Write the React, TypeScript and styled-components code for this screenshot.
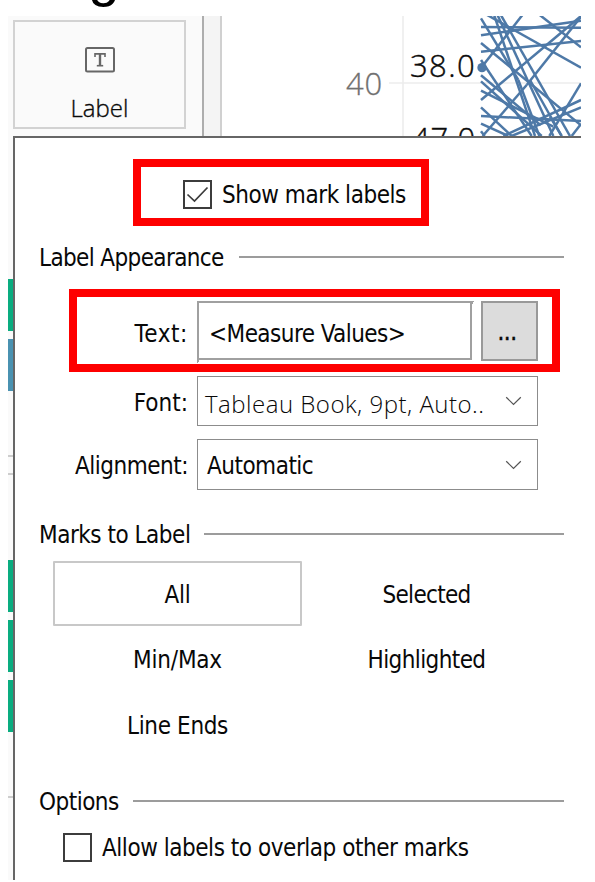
import React from "react";
import styled, { createGlobalStyle } from "styled-components";

const GlobalStyle = createGlobalStyle`
  *, *::before, *::after { box-sizing: border-box; }
  body { margin: 0; background: #fff; color: #080808; font: 24px/30px "DejaVu Sans Condensed", "DejaVu Sans", sans-serif; }
`;

const Page = styled.main`
  width: 595px;
  height: 882px;
  overflow: hidden;
  background: #fff;
`;

const Heading = styled.header`
  height: 16px;
  padding-left: 88px;
  overflow: hidden;
  color: #000;
  font: 57px/60px "Liberation Sans", Arial, sans-serif;
`;

const HeadingText = styled.div`
  margin-top: -55px;
`;

const Workspace = styled.section`
  position: relative;
  display: flex;
  width: 573px;
  height: 864px;
  margin-left: 8px;
  overflow: hidden;
`;

const Shelf = styled.aside`
  display: flex;
  flex-direction: column;
  width: 194px;
  padding-top: 4px;
  background: #fafafa;
`;

const LabelCard = styled.div`
  display: flex;
  flex-direction: column;
  align-items: center;
  gap: 20px;
  width: 173px;
  height: 109px;
  margin: 0 0 150px 5px;
  padding-top: 25px;
  border: 2px solid #d2d2d2;
  font-family: "Open Sans", sans-serif;
  font-weight: 300;
  line-height: 29px;
  -webkit-text-stroke: 0.35px #0c0c0c;
`;

const Pill = styled.div<{ $color: string; $gap: number }>`
  height: 52px;
  margin-bottom: ${(p) => p.$gap}px;
  background: ${(p) => p.$color};
`;

const ShelfRule = styled.div<{ $gap: number }>`
  height: 2px;
  margin-bottom: ${(p) => p.$gap}px;
  background: #cdcdcd;
`;

const Splitter = styled.div`
  width: 20px;
  border-left: 2px solid #adadad;
  border-right: 2px solid #d0d0d0;
  background: #f4f4f4;
`;

const Chart = styled.svg`
  display: block;
  width: 359px;
  height: 120px;
  font-family: "Open Sans", sans-serif;
  font-weight: 300;
  font-size: 31px;
`;

const Popup = styled.section`
  position: absolute;
  top: 120px;
  left: 5px;
  width: 568px;
  height: 744px;
  padding-top: 21px;
  border-top: 2px solid #666;
  border-left: 2px solid #666;
  background: #fff;
`;

const Callout = styled.div<{ $left: number; $width: number; $height: number }>`
  display: flex;
  align-items: center;
  width: ${(p) => p.$width}px;
  height: ${(p) => p.$height}px;
  margin-left: ${(p) => p.$left}px;
  border: 8px solid #fe0000;
`;

const Text = styled.span<{ $track?: number }>`
  padding-top: 1px;
  white-space: pre;
  letter-spacing: ${(p) => p.$track ?? 0}px;
`;

const CheckRow = styled.label<{ $left: number; $top: number }>`
  display: flex;
  align-items: center;
  gap: 10px;
  height: 29px;
  margin: ${(p) => p.$top}px 0 0 ${(p) => p.$left}px;
`;

const CheckBox = styled.span`
  display: flex;
  width: 29px;
  height: 29px;
  border: 2px solid #3c3c3c;
  background: #fff;
`;

const SectionTitle = styled.div<{ $top: number; $gap: number }>`
  display: flex;
  align-items: center;
  gap: ${(p) => p.$gap}px;
  height: 30px;
  margin: ${(p) => p.$top}px 17px 0 24px;

  &::after {
    content: "";
    flex: 1;
    height: 2px;
    margin-bottom: 1px;
    background: #9c9c9c;
  }
`;

const FieldName = styled.div<{ $width: number; $shift?: number }>`
  display: flex;
  justify-content: flex-end;
  flex: none;
  width: ${(p) => p.$width}px;
  margin-right: 9px;
  padding-top: ${(p) => p.$shift ?? 0}px;
`;

const FieldRow = styled.div<{ $top: number }>`
  display: flex;
  align-items: center;
  margin-top: ${(p) => p.$top}px;
`;

/* The bevel's highlight edge runs slightly past the right and bottom sides. */
const TextField = styled.div`
  position: relative;
  display: flex;
  align-items: center;
  width: 275px;
  height: 59px;
  padding: 5px 0 0 10px;
  border: 2px solid #a0a0a0;

  &::before,
  &::after {
    content: "";
    position: absolute;
    width: 3px;
    height: 3px;
    background: linear-gradient(135deg, #a0a0a0 50%, transparent 50%);
  }
  &::before { top: -2px; right: -5px; }
  &::after { bottom: -5px; left: -2px; }
`;

const MoreButton = styled.button`
  width: 57px;
  height: 60px;
  margin: 1px 0 0 9px;
  padding: 2px 5px 0 0;
  border: 2px solid #999;
  background: #dcdcdc;
  color: #080808;
  font: inherit;
  letter-spacing: -0.5px;
  -webkit-text-stroke: 0.4px #080808;
`;

const Select = styled.div<{ $height: number; $light?: boolean }>`
  display: flex;
  align-items: center;
  justify-content: space-between;
  width: 341px;
  height: ${(p) => p.$height}px;
  padding: ${(p) => (p.$light ? "5px 15px 0 7px" : "2px 15px 0 9px")};
  border: 1px solid #8c8c8c;
  font-family: ${(p) => (p.$light ? '"Open Sans", sans-serif' : "inherit")};
  font-weight: ${(p) => (p.$light ? 300 : 400)};
`;

const Arrow = styled.svg<{ $lift: number }>`
  width: 17px;
  height: 10px;
  margin-bottom: ${(p) => p.$lift}px;
`;

const Choices = styled.div`
  display: grid;
  grid-template-columns: 249px 249px;
  grid-auto-rows: 65px;
  row-gap: 0.5px;
  margin: 12px 0 0 38px;
`;

const Choice = styled.div<{ $selected?: boolean }>`
  display: flex;
  align-items: center;
  justify-content: center;
  padding-top: 1px;
  border: 2px solid ${(p) => (p.$selected ? "#c8c8c8" : "transparent")};
  border-radius: 1px;
`;

const LabelIcon = () => (
  <svg width="30" height="26" viewBox="0 0 30 26">
    <rect x="1" y="1" width="28" height="23.5" rx="1.5" fill="none" stroke="#666" strokeWidth="2" />
    <path d="M10 10V6.9H20V10" fill="none" stroke="#666" strokeWidth="1.6" />
    <path d="M15 6.9V18.8" fill="none" stroke="#666" strokeWidth="2.4" />
    <path d="M11.8 18.7H18.2" fill="none" stroke="#666" strokeWidth="1.6" />
  </svg>
);

const Chevron = ({ lift }: { lift: number }) => (
  <Arrow $lift={lift} viewBox="0 0 17 10">
    <path d="M1.2 1.2L8.5 8.4L15.8 1.2" fill="none" stroke="#555" strokeWidth="1.2" />
  </Arrow>
);

/* Each entry is x1, y1, x2, y2 on a plot grid three times finer than the pixels. */
const series = [
  [33, 81, 333, 83], [33, 106, 333, 62], [33, 155, 333, 123],
  [33, 55, 145, 240], [145, 240, 208, 408], [72, 44, 195, 408],
  [82, 44, 250, 408], [92, 44, 300, 408], [50, 44, 333, 203],
  [208, 44, 333, 142], [158, 44, 33, 204], [333, 48, 33, 300],
  [33, 129, 333, 376], [33, 180, 185, 408], [33, 226, 212, 376],
  [33, 244, 215, 408], [33, 272, 250, 380], [33, 322, 125, 408],
  [33, 348, 333, 363], [33, 371, 115, 408], [33, 394, 44, 408],
  [38, 408, 170, 255], [170, 255, 333, 50], [333, 250, 238, 408],
  [333, 300, 100, 408], [333, 322, 125, 408], [333, 372, 305, 408],
  [180, 240, 275, 408], [240, 350, 275, 408],
];

const Plot = () => (
  <Chart viewBox="222 16 359 120">
    <path d="M403 16V136M389 83H581" stroke="#ededed" strokeWidth="1.6" />
    <g transform="translate(470 0) scale(.33333)" stroke="#4e79a7" strokeWidth="7.5" fill="#4e79a7">
      {series.map(([x1, y1, x2, y2], i) => (
        <line key={i} x1={x1} y1={y1} x2={x2} y2={y2} />
      ))}
      <circle cx="36" cy="203" r="14" stroke="none" />
    </g>
    <text x="346" y="95" fill="#707070" stroke="#707070" strokeWidth="0.3" letterSpacing="0.8">40</text>
    <text x="410" y="77" fill="#0c0c0c" stroke="#0c0c0c" strokeWidth="0.4" letterSpacing="1.4">38.0</text>
    <text x="412" y="150" fill="#0c0c0c" stroke="#0c0c0c" strokeWidth="0.4" letterSpacing="0.9">47.0</text>
  </Chart>
);

export default function App() {
  return (
    <Page>
      <GlobalStyle />
      <Heading><HeadingText>g</HeadingText></Heading>
      <Workspace>
        <Shelf>
          <LabelCard><LabelIcon />Label</LabelCard>
          <Pill $color="#0aad80" $gap={8} />
          <Pill $color="#4a92b1" $gap={64} />
          <ShelfRule $gap={16} />
          <ShelfRule $gap={85} />
          <Pill $color="#0aad80" $gap={8} />
          <Pill $color="#0aad80" $gap={8} />
          <Pill $color="#0aad80" $gap={64} />
          <ShelfRule $gap={0} />
        </Shelf>
        <Splitter />
        <Plot />
        <Popup>
          <Callout $left={118} $width={296} $height={67}>
            <CheckRow $left={42} $top={4}>
              <CheckBox>
                <svg width="25" height="25" viewBox="0 0 25 25">
                  <path d="M2.5 12.5L9.5 19L22.5 5.5" fill="none" stroke="#3c3c3c" strokeWidth="1.7" />
                </svg>
              </CheckBox>
              <Text $track={-0.45}>Show mark labels</Text>
            </CheckRow>
          </Callout>
          <SectionTitle $top={16} $gap={15}><Text $track={-0.63}>Label Appearance</Text></SectionTitle>
          <FieldRow $top={17}>
            <Callout $left={54} $width={491} $height={83}>
              <FieldName $width={111} $shift={5}><Text $track={0.6}>Text:</Text></FieldName>
              <TextField><Text $track={-0.55}>&lt;Measure Values&gt;</Text></TextField>
              <MoreButton>...</MoreButton>
            </Callout>
          </FieldRow>
          <FieldRow $top={4}>
            <FieldName $width={173} $shift={2}><Text>Font:</Text></FieldName>
            <Select $height={50} $light><Text $track={0.5}>Tableau Book, 9pt, Auto..</Text><Chevron lift={6} /></Select>
          </FieldRow>
          <FieldRow $top={13}>
            <FieldName $width={173} $shift={1}><Text $track={-0.5}>Alignment:</Text></FieldName>
            <Select $height={51}><Text $track={-0.5}>Automatic</Text><Chevron lift={2} /></Select>
          </FieldRow>
          <SectionTitle $top={29} $gap={14}><Text $track={-0.48}>Marks to Label</Text></SectionTitle>
          <Choices>
            <Choice $selected><Text $track={-0.2}>All</Text></Choice>
            <Choice><Text $track={-0.7}>Selected</Text></Choice>
            <Choice><Text $track={-0.2}>Min/Max</Text></Choice>
            <Choice><Text $track={-0.6}>Highlighted</Text></Choice>
            <Choice><Text $track={-0.35}>Line Ends</Text></Choice>
          </Choices>
          <SectionTitle $top={29} $gap={14}><Text $track={-0.5}>Options</Text></SectionTitle>
          <CheckRow $left={48} $top={17}>
            <CheckBox />
            <Text $track={-0.46}>Allow labels to overlap other marks</Text>
          </CheckRow>
        </Popup>
      </Workspace>
    </Page>
  );
}
